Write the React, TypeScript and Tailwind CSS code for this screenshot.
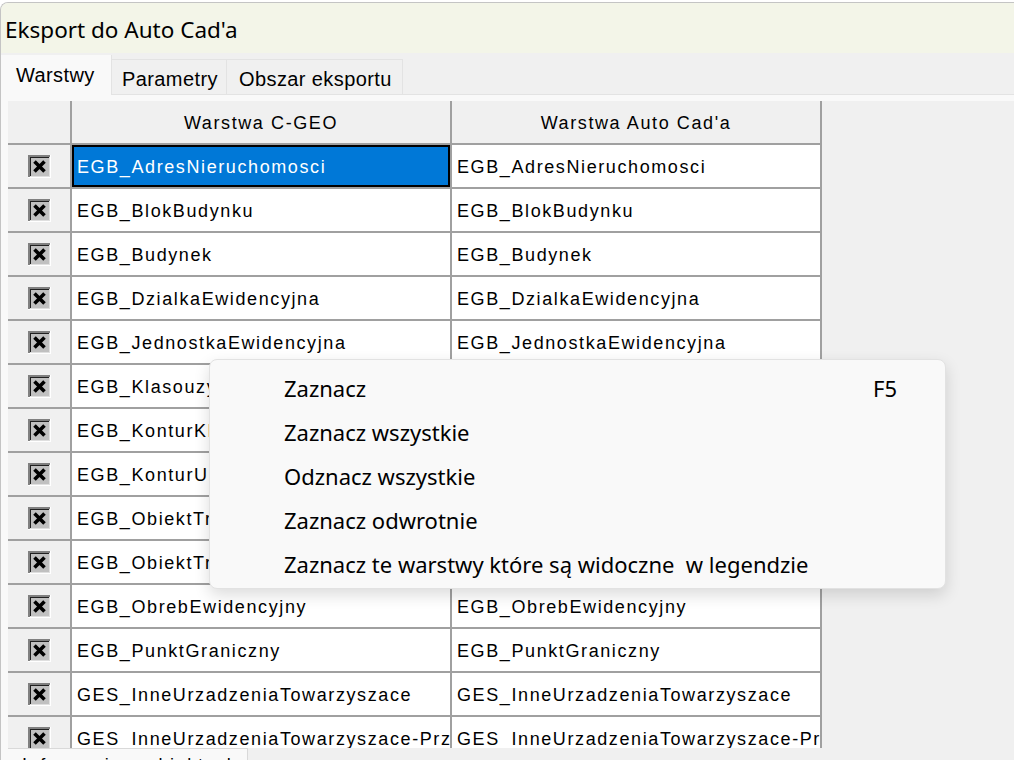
import React from "react";

const rows: [string, string][] = [
  ["EGB_AdresNieruchomosci", "EGB_AdresNieruchomosci"],
  ["EGB_BlokBudynku", "EGB_BlokBudynku"],
  ["EGB_Budynek", "EGB_Budynek"],
  ["EGB_DzialkaEwidencyjna", "EGB_DzialkaEwidencyjna"],
  ["EGB_JednostkaEwidencyjna", "EGB_JednostkaEwidencyjna"],
  ["EGB_KlasouzytekWGranicachDzialki", "EGB_KlasouzytekWGranicachDzialki"],
  ["EGB_KonturKlasyfikacyjny", "EGB_KonturKlasyfikacyjny"],
  ["EGB_KonturUzytkuGruntowego", "EGB_KonturUzytkuGruntowego"],
  ["EGB_ObiektTrwaleZwiazanyZBudynkiem", "EGB_ObiektTrwaleZwiazanyZBudynkiem"],
  ["EGB_ObiektTrwaleZwiazany", "EGB_ObiektTrwaleZwiazany"],
  ["EGB_ObrebEwidencyjny", "EGB_ObrebEwidencyjny"],
  ["EGB_PunktGraniczny", "EGB_PunktGraniczny"],
  ["GES_InneUrzadzeniaTowarzyszace", "GES_InneUrzadzeniaTowarzyszace"],
  ["GES_InneUrzadzeniaTowarzyszace-Przewody", "GES_InneUrzadzeniaTowarzyszace-Przewody"],
];

const menuItems = [
  { label: "Zaznacz", key: "F5" },
  { label: "Zaznacz wszystkie" },
  { label: "Odznacz wszystkie" },
  { label: "Zaznacz odwrotnie" },
  { label: "Zaznacz te warstwy które są widoczne  w legendzie" },
];

function CheckX() {
  return (
    <svg width="23" height="23" viewBox="0 0 23 23">
      <rect x="0" y="0" width="23" height="23" fill="#c0c0c0" />
      <path d="M0 0H23V2H2V23H0Z" fill="#808080" />
      <path d="M2 2H21V3H3V21H2Z" fill="#202020" />
      <path d="M21 2H22V22H2V21H21Z" fill="#dfdfdf" />
      <path d="M22 0H23V23H0V22H22Z" fill="#ffffff" />
      <path d="M6.5 6.5L16.5 16.5M16.5 6.5L6.5 16.5" stroke="#000" strokeWidth="3.6" />
    </svg>
  );
}

const gridFont = { fontFamily: '"Liberation Sans", Arial, sans-serif' };

export default function App() {
  return (
    <div className="relative w-[1014px] h-[760px] overflow-hidden bg-white pt-[2px]">
      <div className="h-full flex flex-col rounded-tl-[8px] border-t border-l border-[#c4c4c4] overflow-hidden bg-[#f0f0f0]">
        {/* title bar */}
        <div
          className="h-[50px] shrink-0 bg-[#f3f5e8] flex items-center pl-[4px] text-[22.5px] text-black"
          style={{ fontFamily: '"Noto Sans", sans-serif' }}
        >
          <span className="mt-[4px]">Eksport do Auto Cad'a</span>
        </div>

        {/* tabs */}
        <div className="h-[42px] shrink-0 flex items-end border-b border-[#e3e3e3] text-[20px] tracking-[0.4px] text-black" style={gridFont}>
          <div className="w-[111px] h-[40px] -mb-[1px] bg-[#f9f9f9] border-r border-[#e3e3e3] pl-[15px] pt-[5px]">
            Warstwy
          </div>
          <div className="w-[115px] h-[35px] border-r border-t border-[#e3e3e3] pl-[10px] pt-[4px]">
            Parametry
          </div>
          <div className="w-[176px] h-[35px] border-r border-t border-[#e3e3e3] pl-[12px] pt-[4px]">
            Obszar eksportu
          </div>
        </div>

        {/* panel */}
        <div className="flex-1 flex flex-col bg-[#f9f9f9] pt-[6px] pl-[7px] min-h-0">
          <div className="h-[647px] shrink-0 bg-[#f0f0f0] overflow-hidden">
            <div
              className="w-[814px] grid grid-cols-[62px_378px_368px] gap-[2px] pr-[2px] pb-[2px] bg-[#a0a0a0] text-[18px] tracking-[1.6px] text-black"
              style={gridFont}
            >
              <div className="h-[42px] bg-[#f0f0f0]" />
              <div className="h-[42px] bg-[#f0f0f0] flex items-center justify-center pt-[2px]">Warstwa C-GEO</div>
              <div className="h-[42px] bg-[#f0f0f0] flex items-center justify-center pt-[2px]">Warstwa Auto Cad'a</div>
              {rows.map(([a, b], i) => (
                <React.Fragment key={i}>
                  <div className="h-[42px] bg-[#f0f0f0] flex items-center justify-center pt-[1px]">
                    <CheckX />
                  </div>
                  {i === 0 ? (
                    <div className="h-[42px] bg-[#0078d7] text-white border-2 border-black pl-[3px] pt-[3px] flex items-center overflow-hidden whitespace-nowrap">
                      {a}
                    </div>
                  ) : (
                    <div className="h-[42px] bg-white pl-[5px] pt-[3px] flex items-center overflow-hidden whitespace-nowrap">
                      {a}
                    </div>
                  )}
                  <div className="h-[42px] bg-white pl-[5px] pt-[3px] flex items-center overflow-hidden whitespace-nowrap">
                    {b}
                  </div>
                </React.Fragment>
              ))}
            </div>
          </div>
          <div className="flex-1 bg-[#f0f0f0] overflow-hidden">
            <div
              className="w-[240px] h-[20px] bg-[#f9f9f9] border-t border-r border-[#d9d9d9] pl-[14px] text-[18px] tracking-[1.6px] leading-[20px] pt-[6px]"
              style={gridFont}
            >
              Informacje o obiektach
            </div>
          </div>
        </div>
      </div>

      {/* context menu */}
      <div
        className="absolute left-[209px] top-[359px] w-[737px] h-[230px] bg-[#f9f9f9] border border-[#e2e2e2] rounded-[8px] shadow-[0_6px_16px_rgba(0,0,0,0.14)] pt-[6px] text-[22px] text-black"
        style={{ fontFamily: '"Noto Sans", sans-serif' }}
      >
        {menuItems.map((m) => (
          <div key={m.label} className="h-[44px] flex items-center justify-between pl-[74px] pr-[48px] whitespace-pre">
            <span>{m.label}</span>
            {m.key && <span>{m.key}</span>}
          </div>
        ))}
      </div>
    </div>
  );
}
